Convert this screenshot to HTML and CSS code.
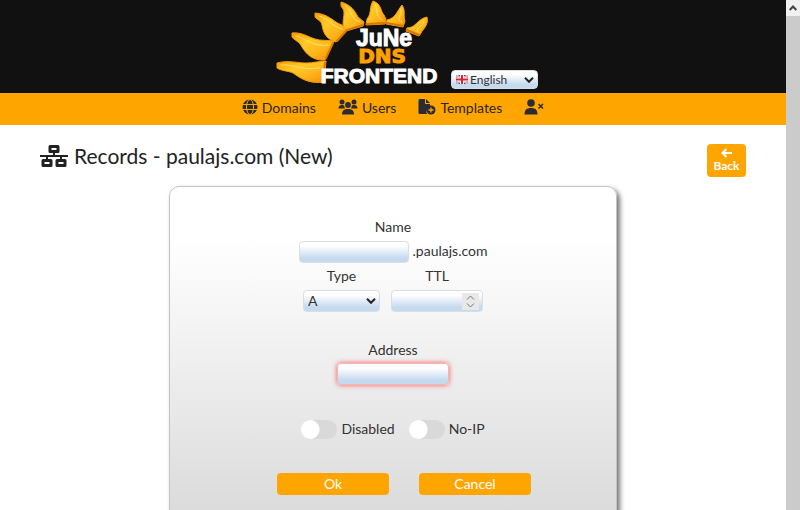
FILE: index.html
```
<!DOCTYPE html>
<html lang="en">
<head>
<meta charset="utf-8">
<title>June DNS Frontend</title>
<link rel="stylesheet" href="styles.css">
</head>
<body>
<div class="page">
  <header class="top">
    <svg class="logo" width="164" height="89" viewBox="0 0 164 89" role="img" aria-label="June DNS Frontend">
      <defs>
        <linearGradient id="ray" x1="0" y1="0" x2="1" y2="1">
          <stop offset="0" stop-color="#ff9b00"/><stop offset=".35" stop-color="#ffc928"/><stop offset=".65" stop-color="#ffb51c"/><stop offset="1" stop-color="#f98b00"/>
        </linearGradient>
      </defs>
      <g fill="url(#ray)" stroke="#f59a0a" stroke-width="1" stroke-linejoin="round">
        <path d="M1 63 C12 60 22 63 30 63 C38 63 43 61 50 61 L48 82 C36 84 27 80 20 75 C14 70 7 72 1 68Z"/>
        <path d="M16 33 C26 32 32 37 39 39 C45 41 51 40 58 41 L49 60 C37 61 30 54 26 47 C23 41 19 41 16 37Z"/>
        <path d="M39 13 C50 14 54 18 60 22 C64 25 68 25 72 28 L60 42 C49 39 47 31 46 25 C45 20 41 20 39 17Z"/>
        <path d="M65 2 C76 5 79 12 82 17 L88 22 L87 26 L70 31 C65 25 68 19 68 13 C68 8 65 8 65 5Z"/>
        <path d="M97 1 C106 4 104 11 108 15 L110 19 L109 24 L90 25 L91 19 C96 13 93 7 97 1Z"/>
        <path d="M126 5 C130 11 127 16 129 21 L127 27 L110 24 L111 20 C120 18 121 11 126 5Z"/>
        <path d="M151 17 C153 25 147 29 145 33 L143 36 L130 31 L131 28 C140 28 141 19 151 17Z"/>
      </g>
      <g fill="none" stroke="#ffe36a" stroke-width="1" stroke-linecap="round">
        <path d="M5 65 C19 64 26 71 44 68M20 36 C31 39 36 47 53 45M43 16 C54 19 55 26 66 29M69 5 C77 12 75 20 84 22M99 4 C102 11 99 15 106 20M125 10 C126 16 119 19 126 22M148 21 C148 27 138 28 142 32"/>
      </g>
      <g fill="none" stroke="#d97800" stroke-width="2" stroke-linecap="round">
        <path d="M49 63L47 80M57 43L50 58M71 30L61 41M71 30L87 25M91 24L109 23M111 23L127 26M131 30L143 35"/>
      </g>
      <text class="logo-june" x="108" y="46">JuNe</text>
      <text class="logo-dns" x="106" y="63">DNS</text>
      <text class="logo-front" x="103" y="83">FRONTEND</text>
    </svg>
    <div class="picker">
      <svg class="flag" width="12" height="9" viewBox="0 0 12 9" aria-hidden="true"><path fill="#33558f" d="M0 0h12v9H0z"/><path d="M0 0l12 9M12 0L0 9" stroke="#fff" stroke-width="2"/><path d="M0 0l12 9M12 0L0 9" stroke="#d33" stroke-width=".7"/><path d="M6 0v9M0 4.500h12" stroke="#fff" stroke-width="4"/><path d="M6 0v9M0 4.500h12" stroke="#d92332" stroke-width="2"/></svg>
      <select class="field lang" aria-label="Language"><option>English</option></select>
      <svg class="chev" width="10" height="6" viewBox="0 0 10 6" aria-hidden="true"><path d="M1 .8l4 4 4-4"/></svg>
    </div>
  </header>
  <nav class="nav">
    <a href="#"><svg width="16" height="16" viewBox="0 0 16 16"><circle cx="8" cy="8" r="7.500"/><g fill="none" stroke="#ffa500"><ellipse cx="8" cy="8" rx="3.500" ry="7.500"/><path d="M0 5.500h16M0 10.500h16"/></g></svg>Domains</a>
    <a href="#"><svg width="20" height="16" viewBox="0 0 20 16"><circle cx="4" cy="3" r="2.500"/><circle cx="16" cy="3" r="2.500"/><circle cx="10" cy="6" r="2.900"/><path d="M.5 9.500C.5 7 2 6 4 6c1 0 2 .3 2.400.8-.2 1.200.2 2 .8 2.700zM19.500 9.500C19.500 7 18 6 16 6c-1 0-2 .3-2.400.8.2 1.200-.2 2-.8 2.700zM4 15.500c0-4 2-5.500 6-5.500s6 1.500 6 5.500z"/></svg>Users</a>
    <a href="#"><svg width="18" height="16" viewBox="0 0 18 16"><path d="M2 0h5v5h5v3a5 5 0 0 0-3 7H2a1.500 1.500 0 0 1-1.500-1.500v-12A1.500 1.500 0 0 1 2 0zM8 0l4 4H8z"/><circle cx="13" cy="11" r="4.500"/><path d="M13 8.500v5M10.500 11h5" stroke="#ffa500" stroke-width="1.300"/></svg>Templates</a>
    <a href="#" aria-label="Log out"><svg width="20" height="16" viewBox="0 0 20 16"><circle cx="7" cy="4" r="3.800"/><path d="M.5 15.500c0-4.500 2-6.500 6.500-6.500s6.500 2 6.500 6.500z"/><path d="M14.500 5l4.500 4.500M19 5l-4.500 4.500" stroke="#2b2b33" stroke-width="1.500"/></svg></a>
  </nav>
  <main class="main">
    <div class="heading">
      <h1><svg width="28" height="24" viewBox="0 0 28 24" fill="none" stroke="#222" stroke-width="3" stroke-linejoin="round" aria-hidden="true"><path d="M10 2.500h8v5h-8zM3 16.500h8v5H3zM17 16.500h8v5h-8z"/><path d="M0 12h28M14 8v4M7 12v4M21 12v4" stroke-width="2"/></svg>Records - paulajs.com (New)</h1>
      <button class="btn back" type="button"><svg width="12" height="10" viewBox="0 0 12 10" fill="none" stroke="#fff" stroke-width="2" aria-hidden="true"><path d="M11 5H2M5.500 1L1.500 5l4 4"/></svg>Back</button>
    </div>
    <form class="card">
      <label class="label" for="name">Name</label>
      <div class="row name-row"><input class="field name" id="name" type="text"><span>.paulajs.com</span></div>
      <div class="row pair">
        <div class="cell type"><label class="label" for="type">Type</label>
          <div class="picker"><select class="field" id="type"><option>A</option></select><svg class="chev" width="10" height="6" viewBox="0 0 10 6" aria-hidden="true"><path d="M1 .8l4 4 4-4"/></svg></div></div>
        <div class="cell ttl"><label class="label" for="ttl">TTL</label>
          <div class="picker"><input class="field" id="ttl" type="number"><svg class="spin" width="17" height="17" viewBox="0 0 17 17" aria-hidden="true"><path d="M5 6.500l3.500-3.500L12 6.500M5 10.500L8.500 14l3.500-3.500"/></svg></div></div>
      </div>
      <div class="address"><label class="label" for="addr">Address</label><input class="field invalid" id="addr" type="text" required></div>
      <div class="row toggles">
        <label class="switch"><input type="checkbox">Disabled</label>
        <label class="switch"><input type="checkbox">No-IP</label>
      </div>
      <div class="row actions"><button class="btn" type="submit">Ok</button><button class="btn" type="button">Cancel</button></div>
    </form>
  </main>
</div>
<div class="scrollbar" aria-hidden="true"><div class="arrow"><svg width="8" height="6" viewBox="0 0 8 6"><path d="M.7 5L4 1.500 7.300 5" fill="none" stroke="#444" stroke-width="2"/></svg></div></div>
</body>
</html>
```
FILE: styles.css
```
* { box-sizing: border-box; }
html, body { height: 100%; }
body {
  margin: 0;
  display: grid;
  grid-template-columns: minmax(0, 1fr) 14px;
  overflow: hidden;
  background: #fff;
  color: #333;
  font: 14px/20px Lato, "Liberation Sans", sans-serif;
}
input, select, button { font: inherit; color: inherit; margin: 0; }
.top {
  display: flex;
  justify-content: center;
  align-items: flex-end;
  gap: 11px;
  padding: 0 0 4px 28px;
  background: #111;
}
.logo { display: block; }
.logo text { text-anchor: middle; }
.logo-june { font: bold 23px "Liberation Sans", sans-serif; fill: #fff; stroke: #fff; }
.logo-dns { font: bold 20px "DejaVu Sans", sans-serif; fill: #ffa000; stroke: #ffa000; }
.logo-front { font: bold 21px "Liberation Sans", sans-serif; fill: #fff; stroke: #fff; }
.nav {
  display: flex;
  justify-content: center;
  gap: 22px;
  height: 32px;
  padding-top: 5px;
  background: #ffa500;
}
.nav a { display: flex; gap: 4px; align-items: flex-start; color: #2b2418; text-decoration: none; }
.nav svg { margin-top: 1px; fill: #2b2b33; }
.main { padding: 19px 40px 0; }
.heading { display: flex; justify-content: space-between; align-items: flex-start; }
h1 { display: flex; align-items: center; gap: 6px; margin: 0; font-size: 21px; line-height: 24px; font-weight: 400; color: #222; }
.btn {
  border: 0;
  border-radius: 4px;
  background: #ffa500;
  color: #fff;
  width: 112px;
  height: 22px;
  padding: 0;
}
.back {
  width: 39px;
  height: 33px;
  display: flex;
  flex-direction: column;
  align-items: center;
  justify-content: center;
  font-size: 12px;
  line-height: 16px;
  font-weight: 700;
}
.card {
  width: 448px;
  max-width: 100%;
  margin: 9px auto 0;
  padding: 30px 0 40px;
  border: 1px solid #c4c4c4;
  border-radius: 10px;
  background: linear-gradient(#fff 15%, #d8d8d8);
  box-shadow: 3px 3px 5px #777;
}
.label { display: block; text-align: center; }
.row { display: flex; justify-content: center; }
.field {
  width: 100%;
  height: 22px;
  border: 1px solid #dadde2;
  border-radius: 4px;
  padding: 0 4px;
  background: linear-gradient(#fff 20%, #c6daef 80%);
  appearance: none;
}
#ttl { appearance: textfield; }
.name-row { margin-top: 4px; gap: 4px; }
.name { width: 110px; }
.pair { gap: 11px; margin-top: 3px; }
.type { width: 77px; }
.ttl { width: 92px; }
.pair .picker { margin-top: 4px; }
.picker { position: relative; }
.top .picker { width: 87px; }
.lang { display: block; height: 19px; padding-left: 18px; font-size: 12px; line-height: 16px; }
.flag { position: absolute; left: 5px; top: 5px; }
.chev { position: absolute; right: 4px; top: 50%; margin-top: -3px; fill: none; stroke: #222; stroke-width: 2; pointer-events: none; }
.spin { position: absolute; right: 4px; top: 3px; background: #e8e8e8; fill: none; stroke: #777; }
.address { width: 112px; margin: 28px auto 0; }
.address .field { display: block; margin-top: 3px; }
.invalid { border-color: #f3b5b5; box-shadow: 0 0 5px #f55; }
.toggles { gap: 14px; margin-top: 34px; }
.switch { display: flex; align-items: center; gap: 4px; }
.switch input {
  appearance: none;
  width: 36px;
  height: 19px;
  border-radius: 10px;
  background: radial-gradient(circle at 9px 50%, #fff 9px, #d9d9d9 10px);
}
.actions { gap: 30px; margin-top: 34px; padding-left: 22px; }
.scrollbar { background: #cbcbcb; }
.arrow { display: flex; align-items: center; justify-content: center; height: 16px; background: #f0f0f0; }
```
